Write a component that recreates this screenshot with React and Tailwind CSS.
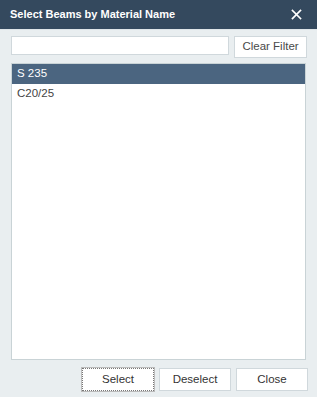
export default function App() {
  const font = { fontFamily: '"Liberation Sans", Arial, sans-serif' };
  return (
    <div className="w-[317px] h-[397px] bg-[#e9eef0] flex flex-col" style={font}>
      <div className="h-[30px] bg-[#34495e] flex items-center justify-between pl-[10px] pr-[15px] border-b border-[#dfe5e8]">
        <span className="text-white font-bold text-[11px]">Select Beams by Material Name</span>
        <svg width="11" height="11" viewBox="0 0 11 11">
          <path d="M1.5 1.5 L9.5 9.5 M9.5 1.5 L1.5 9.5" stroke="white" strokeWidth="1.7" strokeLinecap="square" />
        </svg>
      </div>
      <div className="flex items-start pl-[11px] pr-[10px] pt-[6px] gap-[5px]">
        <div className="w-[218px] h-[19px] bg-white border border-[#d0d8dc]" />
        <button className="w-[73px] h-[22px] bg-white border border-[#d0d8dc] text-[11.5px] text-[#4a4a4a] flex items-center justify-center">Clear Filter</button>
      </div>
      <div className="mx-[11px] mt-[5px] h-[297px] bg-white border border-[#c9d3d6] flex flex-col">
        <div className="h-[20px] bg-[#4b6580] text-white text-[11.5px] flex items-center pl-[5px]">S 235</div>
        <div className="h-[20px] text-[#444] text-[11.5px] flex items-center pl-[5px]">C20/25</div>
      </div>
      <div className="flex justify-end gap-[5px] pr-[9px] mt-[8px]">
        <button className="w-[72px] h-[23px] bg-white border border-dotted border-[#777] text-[11.5px] text-[#333] flex items-center justify-center outline outline-1 outline-[#bbb]">Select</button>
        <button className="w-[72px] h-[23px] bg-white border border-[#d0d8dc] text-[11.5px] text-[#333] flex items-center justify-center">Deselect</button>
        <button className="w-[72px] h-[23px] bg-white border border-[#d0d8dc] text-[11.5px] text-[#333] flex items-center justify-center">Close</button>
      </div>
    </div>
  );
}
